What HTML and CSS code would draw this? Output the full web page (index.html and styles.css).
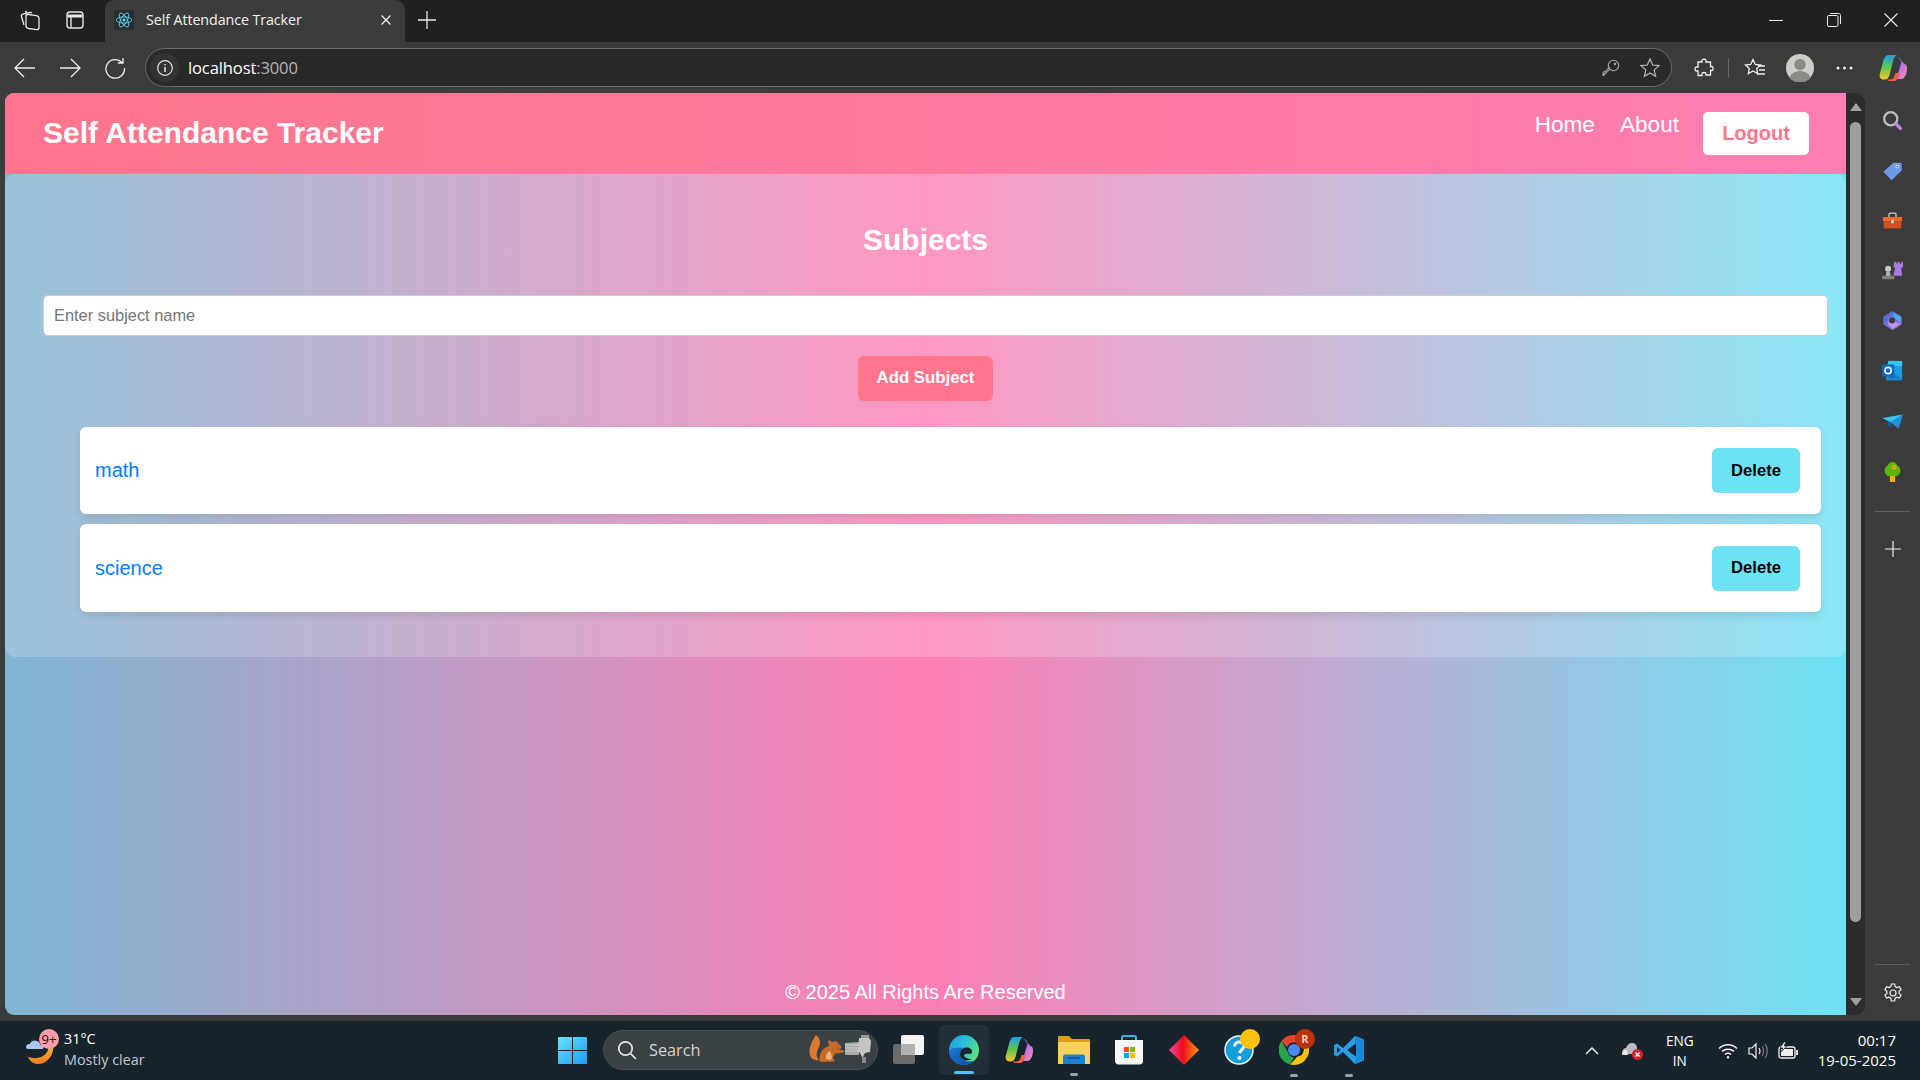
FILE: index.html
```html
<!DOCTYPE html>
<html lang="en">
<head>
<meta charset="utf-8">
<title>Self Attendance Tracker</title>
<link rel="stylesheet" href="styles.css">
</head>
<body>
<div class="tabstrip">
  <span class="strip-btn first"><svg width="24" height="24" viewBox="0 0 24 24" fill="none" stroke="#e6e6e6" stroke-width="1.3"><rect x="8" y="7" width="13" height="14" rx="2.5" transform="skewY(8) translate(0 -2)"/><path d="M6 17 3.5 8.5c-.3-1 .2-2 1.2-2.300L12 4.500c.8-.2 1.500.1 1.900.7"/><path d="M9 3.500 7 4"/></svg></span>
  <span class="strip-btn"><svg width="20" height="20" viewBox="0 0 20 20" fill="none" stroke="#e6e6e6" stroke-width="1.4"><rect x="2" y="2" width="16" height="16" rx="3"/><path d="M2.500 6h15" stroke-width="3"/><path d="M6 7v10.500"/></svg></span>
  <div class="tab">
    <span class="favicon"><svg width="18" height="18" viewBox="-12 -12 24 24" fill="none" stroke="#61dafb" stroke-width="1.100"><circle r="2" fill="#61dafb" stroke="none"/><ellipse rx="10.500" ry="4.200"/><ellipse rx="10.500" ry="4.200" transform="rotate(60)"/><ellipse rx="10.500" ry="4.200" transform="rotate(120)"/></svg></span>
    <span class="tab-title">Self Attendance Tracker</span>
    <svg class="tab-close" width="12" height="12" viewBox="0 0 12 12" stroke="#f2f2f2" stroke-width="1.300"><path d="M1.500 1.500l9 9M10.500 1.500l-9 9"/></svg>
  </div>
  <svg class="new-tab" width="18" height="18" viewBox="0 0 18 18" stroke="#e8e8e8" stroke-width="1.300"><path d="M9 0v18M0 9h18"/></svg>
  <div class="win-controls">
    <svg width="14" height="14" viewBox="0 0 14 14" stroke="#eee"><path d="M0 7.500h14"/></svg>
    <svg width="14" height="14" viewBox="0 0 14 14" fill="none" stroke="#eee"><rect x=".5" y="2.500" width="10.500" height="11" rx="1.500"/><path d="M3 .5h8.500c1.200 0 2 .8 2 2V11"/></svg>
    <svg width="14" height="14" viewBox="0 0 14 14" stroke="#eee" stroke-width="1.100"><path d="M.5.5l13 13M13.500.5l-13 13"/></svg>
  </div>
</div>

<div class="toolbar">
  <svg class="nav-first" width="22" height="20" viewBox="0 0 22 20" fill="none" stroke="#eee" stroke-width="1.300"><path d="M1 10h20M10 1 1 10l9 9"/></svg>
  <svg class="nav-next" width="22" height="20" viewBox="0 0 22 20" fill="none" stroke="#eee" stroke-width="1.300"><path d="M1 10h20M12 1l9 9-9 9"/></svg>
  <svg class="nav-next" width="22" height="22" viewBox="0 0 22 22" fill="none" stroke="#eee" stroke-width="1.300"><path d="M18 5.500A9.300 9.300 0 1 0 20.500 11M19 1v5h-5"/></svg>
  <div class="address">
    <span class="info"><svg width="16" height="16" viewBox="0 0 16 16" fill="none" stroke="#e8e8e8" stroke-width="1.200"><circle cx="8" cy="8" r="7.300"/><path d="M8 7v5M8 4v1.500" stroke-width="1.500"/></svg></span>
    <span class="url">localhost<span class="port">:3000</span></span>
    <svg class="key" width="18" height="18" viewBox="0 0 18 18" fill="none" stroke="#a8a8a8" stroke-width="1.100"><circle cx="11.500" cy="6.500" r="5.200"/><circle cx="13" cy="5" r=".7"/><path d="M7.800 10.200 1.500 16.500H1v-2.500l1-.1v-1.400h1.500l4-4.500"/></svg>
    <svg class="star" width="20" height="20" viewBox="0 0 20 20" fill="none" stroke="#b8b8b8" stroke-width="1.200"><path d="M10 1l2.700 6 6.300.6-4.800 4.300 1.400 6.400L10 15l-5.600 3.300 1.400-6.400L1 7.600 7.300 7z"/></svg>
  </div>
  <svg class="ext" width="20" height="20" viewBox="0 0 20 20" fill="none" stroke="#eee" stroke-width="1.300"><path d="M8 2.500C8 .8 12 .8 12 2.500V4h4.500v4.500H18c1.500 0 1.500 4 0 4h-1.500V17H12v-1c0-2-4-2-4 0v1.500H4V13H2.500c-2 0-2-4 0-4H4V4h4z"/></svg>
  <span class="tool-sep"></span>
  <svg class="fav" width="22" height="20" viewBox="0 0 22 20" fill="none" stroke="#eee" stroke-width="1.300"><path d="M9 1.500l2.300 5 5.200.5-3.800 3.500 1 5.300L9 13l-4.700 2.800 1-5.300L1.500 7l5.200-.5zM14 8h7M15 12h6M13 16h8"/></svg>
  <svg class="avatar" width="28" height="28" viewBox="0 0 28 28"><circle cx="14" cy="14" r="14" fill="#cfcdc8"/><circle cx="14" cy="10.500" r="5.800" fill="#8c8a86"/><path d="M3.500 24c1.500-5 6-7 10.500-7s9 2 10.500 7a14 14 0 0 1-21 0z" fill="#8c8a86"/></svg>
  <svg class="dots" width="17" height="4" viewBox="0 0 17 4" fill="#eee"><circle cx="2" cy="2" r="1.500"/><circle cx="8.500" cy="2" r="1.500"/><circle cx="15" cy="2" r="1.500"/></svg>
  <svg class="copilot" width="28" height="28" viewBox="0 0 28 28"><defs><linearGradient id="cpA" x1="0" y1="0" x2="0" y2="1"><stop offset="0" stop-color="#1f9cf0"/><stop offset=".5" stop-color="#5dc84a"/><stop offset="1" stop-color="#f7c52e"/></linearGradient><linearGradient id="cpB" x1="0" y1="0" x2="1" y2="1"><stop offset="0" stop-color="#3a6cf0"/><stop offset=".5" stop-color="#c66ce0"/><stop offset="1" stop-color="#f79aa8"/></linearGradient></defs><path d="M9.500 1h8.500c-2 1-3 3-3.800 5.500L10.500 21c-.8 3-2.500 4.500-5 4.500h-1C1.500 25.500 0 23 .8 20L4.500 6C5.500 3 7 1 9.500 1z" fill="url(#cpA)"/><path d="M18 3c2.300 0 3.700 1.500 4.500 4l3 3h0c1.500 0 2.500 2 2.500 4 0 5-2 11-6 11h-7c2.500-1 3.500-3 4-5.500l3-10C23 7 20 4 18 3z" fill="url(#cpB)"/><path d="M8 25.500h3c2.500 0 4-1.500 4.500-3.500l1-3h4l-1.500 5c-.6 2-2 3-4 3H11c-1.500 0-2.500-.5-3-1.500z" fill="#f0603a"/></svg>
</div>

<div class="workspace">
  <div class="page">
    <header class="app-header">
      <h1 class="brand">Self Attendance Tracker</h1>
      <nav class="app-nav">
        <a class="nav-link">Home</a>
        <a class="nav-link">About</a>
        <button class="logout">Logout</button>
      </nav>
    </header>
    <main class="subjects">
      <h2 class="subjects-title">Subjects</h2>
      <input class="subject-input" type="text" placeholder="Enter subject name">
      <button class="add-btn">Add Subject</button>
      <ul class="subject-list">
        <li class="subject-item"><a class="subject-link">math</a><button class="delete-btn">Delete</button></li>
        <li class="subject-item"><a class="subject-link">science</a><button class="delete-btn">Delete</button></li>
      </ul>
    </main>
    <footer class="app-footer">© 2025 All Rights Are Reserved</footer>
  </div>

  <div class="scrollbar">
    <span class="arrow-up"></span>
    <span class="thumb"></span>
    <span class="arrow-down"></span>
  </div>

  <aside class="sidebar">
    <svg class="side-ico" viewBox="0 0 24 24" fill="none"><circle cx="10" cy="10" r="7.500" stroke="#bdbdbd" stroke-width="2.600"/><path d="M16 16l5 5" stroke="#b98ae0" stroke-width="4" stroke-linecap="round"/></svg>
    <svg class="side-ico" viewBox="0 0 24 24"><path d="M13 3h8c1 0 1.500.5 1.500 1.500V12L11 23 1.500 13.500z" fill="#6c9be8"/><circle cx="17.500" cy="7.500" r="2" fill="#e8f0ff"/><circle cx="17.500" cy="7.500" r="1" fill="#35558c"/></svg>
    <svg class="side-ico" viewBox="0 0 24 24"><path d="M8 8V5c0-1 .5-1.500 1.500-1.500h5c1 0 1.500.5 1.500 1.500v3" fill="none" stroke="#c8c8c8" stroke-width="1.500"/><path d="M1 8h22v5H1z" fill="#f2692e"/><path d="M2 13h20v8H2z" fill="#d9501e"/><rect x="10.500" y="11" width="3" height="4" fill="#d8d8d8"/></svg>
    <svg class="side-ico" viewBox="0 0 24 24"><path d="M14 2h2.500v2H18V2h2v2h2V2h2v6l-2 1 1 9H13l2-9-2-1z" fill="#a77be0"/><circle cx="7" cy="10" r="3.500" fill="#c9c9c9"/><path d="M5 13h4l1 6H4z" fill="#b0b0b0"/><rect x="0" y="18" width="14" height="4" rx="1.500" fill="#7e7e7e"/></svg>
    <svg class="side-ico" viewBox="0 0 24 24"><defs><linearGradient id="m3" x1="0" y1="0" x2="1" y2="1"><stop offset="0" stop-color="#3a6fd8"/><stop offset="1" stop-color="#b070e0"/></linearGradient></defs><path d="M12 1l9 5.500c1 .6 1.500 1.500 1.500 2.500v6c0 1-.5 2-1.500 2.500L12 23l-9-5.500C2 17 1.500 16 1.500 15V9C1.500 8 2 7 3 6.500z" fill="url(#m3)"/><path d="M13 3l8 5v5l-7-4z" fill="#36b8e8"/><path d="M8 9l6 4v0l6 3-7 5-6-4z" fill="#c09ae8"/><circle cx="11.500" cy="12" r="3.500" fill="#3b3b3b"/></svg>
    <svg class="side-ico" viewBox="0 0 24 24"><path d="M7 1h16v22H5v-4z" fill="#1a9de0"/><path d="M7 1h16v6H7z" fill="#3cc0f0"/><path d="M5 22l9-7 9 7z" fill="#0f7cc8"/><rect x="0" y="5" width="14" height="14" rx="1.500" fill="#0a66c2"/><circle cx="7" cy="12" r="3.600" fill="none" stroke="#fff" stroke-width="1.800"/></svg>
    <svg class="side-ico" viewBox="0 0 24 24"><path d="M0 8l24-4-14 9z" fill="#42bdf0"/><path d="M24 4L10 13l9 7z" fill="#1a92dc"/><path d="M7 11l3 2v7l-3-4z" fill="#0a62b0"/></svg>
    <svg class="side-ico" viewBox="0 0 24 24"><rect x="9" y="17" width="6" height="7" fill="#f0b400"/><path d="M12 1c3 0 5 2 5.500 4.500 2.500 1 3.500 3 3.500 5.500 0 3-2 6-5 6H8c-3 0-5-3-5-6 0-2.500 1-4.500 3.500-5.500C7 3 9 1 12 1z" fill="#5fb40e"/><circle cx="14" cy="7" r="2.400" fill="#f0b400"/><circle cx="14" cy="7" r="1" fill="#d86820"/></svg>
    <span class="side-sep"></span>
    <svg class="side-plus" width="16" height="16" viewBox="0 0 16 16" stroke="#eee" stroke-width="1.200"><path d="M8 0v16M0 8h16"/></svg>
    <span class="side-sep side-sep-bottom"></span>
    <svg class="gear" width="20" height="20" viewBox="0 0 20 20" fill="none" stroke="#eee" stroke-width="1.200"><circle cx="10" cy="10" r="3"/><path d="M8.300 1h3.400l.5 2.600 1.700 1 2.500-.9 1.700 3-2 1.700v2l2 1.700-1.700 3-2.500-.9-1.700 1-.5 2.800H8.300l-.5-2.800-1.700-1-2.500.9-1.700-3 2-1.700v-2l-2-1.700 1.700-3 2.500.9 1.700-1z"/></svg>
  </aside>
</div>

<div class="taskbar">
  <div class="weather">
    <span class="weather-icon">
      <svg width="36" height="36" viewBox="0 0 36 36"><defs><linearGradient id="moon" x1="0" y1="0" x2="0" y2="1"><stop offset="0" stop-color="#f6c042"/><stop offset="1" stop-color="#ee7a1a"/></linearGradient></defs><path d="M28 12c2 8-3 20-14 21-5 .4-9-2-11-7 8 3 18 0 20-7 .5-2 1.500-5 5-7z" fill="url(#moon)"/><path d="M1 16c0-2 2-3.500 4-3 1-3 4-4.500 7-3 2 .8 3 2 3.500 4 2 .1 3 1 3 2.500 0 1-1 1.500-2 1.500H3c-1.500 0-2-1-2-2.500z" fill="#a9c8f0"/></svg>
      <span class="badge">9+</span>
    </span>
    <span class="weather-text"><span class="temp">31°C</span><span class="cond">Mostly clear</span></span>
  </div>
  <div class="task-center">
    <svg class="winlogo" width="29" height="29" viewBox="0 0 29 29"><defs><linearGradient id="win" x1="0" y1="0" x2="1" y2="1"><stop offset="0" stop-color="#6ce0ff"/><stop offset="1" stop-color="#1a9cf5"/></linearGradient></defs><path d="M1 1h13v13H0V2c0-.5.5-1 1-1zM15 1h13c.5 0 1 .5 1 1v12H15zM0 15h14v13H1c-.5 0-1-.5-1-1zM15 15h14v12c0 .5-.5 1-1 1H15z" fill="url(#win)"/></svg>
    <div class="search">
      <svg width="20" height="20" viewBox="0 0 20 20" fill="none" stroke="#e8e8e8" stroke-width="1.700"><circle cx="8.500" cy="8.500" r="6.700"/><path d="M13.500 13.500l5.500 5.500"/></svg>
      <span class="search-label">Search</span>
      <svg class="squirrel" width="64" height="32" viewBox="0 0 64 32"><path d="M7 1c4 3 5 8 3 12s-4 9 0 13c-5 1-9-2-9.500-7S3 6 7 1z" fill="#dd7a2e"/><path d="M11 28c-2-7 2-14 9-16l-1-6 5 2 3-1 5 5c1 1 0 3-1 3l-5-.5 9 2v2l-9 1-2 4 2 4h-2z" fill="#c66a28"/><path d="M17 25c-1-3 1-7 4-8l2 6-1 3z" fill="#eab07c"/><path d="M36 9l14-1v13H36z" fill="#a9a9a9"/><path d="M36 11h14M36 14h14M36 17h14" stroke="#d2d2d2"/><path d="M50 4h10l2 3-1 11-5 1-2 4h-1l-2-4-2-2z" fill="#c4c4c4"/><rect x="53" y="23" width="4" height="6" fill="#888"/><rect x="52" y="1" width="8" height="3" fill="#9a9a9a"/></svg>
    </div>
    <svg class="taskview" width="32" height="30" viewBox="0 0 32 30"><rect x="0" y="9" width="22" height="20" rx="2" fill="#6a6a6a"/><rect x="8" y="0" width="23" height="20" rx="2" fill="#f4f4f4"/><rect x="8" y="9" width="14" height="11" fill="#b2b2b2"/></svg>
    <div class="edge-box">
      <svg width="30" height="30" viewBox="0 0 30 30"><defs><linearGradient id="edge1" x1="0" y1="0" x2="1" y2=".5"><stop offset="0" stop-color="#1a9de0"/><stop offset=".55" stop-color="#2bc0d8"/><stop offset="1" stop-color="#5ee27a"/></linearGradient><linearGradient id="edge2" x1="0" y1="0" x2="1" y2="1"><stop offset="0" stop-color="#1a78d8"/><stop offset="1" stop-color="#0c4fa8"/></linearGradient></defs><circle cx="15" cy="15" r="15" fill="url(#edge1)"/><path d="M0 15C0 24 7 30 15 30c4 0 8-1.500 11-4.500-6 2-12 .5-14-3-2-4 0-8 3-9.500-6-1.500-12 0-15 2z" fill="url(#edge2)"/><path d="M15 13c4-1.500 8 .5 8 3.500 0 1-.5 2-1.500 2.500-3-.5-5.500 0-6.500 1 0 2 3 4 7.500 4-4 2.500-8.500 1.500-10.500-1.500s-.5-8 3-9.500z" fill="#17242b"/></svg>
      <span class="task-active"></span>
    </div>
    <svg class="task-ico first-ico" width="28" height="28" viewBox="0 0 28 28"><defs><linearGradient id="cpC" x1="0" y1="0" x2="0" y2="1"><stop offset="0" stop-color="#1f9cf0"/><stop offset=".5" stop-color="#5dc84a"/><stop offset="1" stop-color="#f7c52e"/></linearGradient><linearGradient id="cpD" x1="0" y1="0" x2="1" y2="1"><stop offset="0" stop-color="#3a6cf0"/><stop offset=".5" stop-color="#c66ce0"/><stop offset="1" stop-color="#f79aa8"/></linearGradient></defs><path d="M9.500 1h8.500c-2 1-3 3-3.800 5.500L10.500 21c-.8 3-2.500 4.500-5 4.500h-1C1.500 25.500 0 23 .8 20L4.500 6C5.500 3 7 1 9.500 1z" fill="url(#cpC)"/><path d="M18 3c2.300 0 3.700 1.500 4.500 4l3 3h0c1.500 0 2.500 2 2.500 4 0 5-2 11-6 11h-7c2.500-1 3.500-3 4-5.500l3-10C23 7 20 4 18 3z" fill="url(#cpD)"/><path d="M8 25.500h3c2.500 0 4-1.500 4.500-3.500l1-3h4l-1.500 5c-.6 2-2 3-4 3H11c-1.500 0-2.500-.5-3-1.500z" fill="#f0603a"/></svg>
    <span class="task-slot">
      <svg width="32" height="28" viewBox="0 0 32 28"><path d="M1 0h10l3 3h17c.5 0 1 .5 1 1v23c0 .5-.5 1-1 1H1c-.5 0-1-.5-1-1V1c0-.5.5-1 1-1z" fill="#dfa018"/><path d="M0 6h32v21c0 .5-.5 1-1 1H1c-.5 0-1-.5-1-1z" fill="#fad25a"/><path d="M5 28v-7c0-1.500 1-2.500 2-2.500h18c1 0 2 1 2 2.500v7z" fill="#1f7ed0"/><path d="M10 22h12" stroke="#0d5296" stroke-width="1.500"/></svg>
      <span class="task-dot"></span>
    </span>
    <svg class="task-ico store-ico" width="30" height="30" viewBox="0 0 30 30"><path d="M8 6V3c0-1 .5-2 1.500-2h11c1 0 1.500 1 1.500 2v3" fill="none" stroke="#2ab8f0" stroke-width="2"/><path d="M1 5h28v21c0 2-1.500 3.500-3.500 3.500h-21C2.500 29.500 1 28 1 26z" fill="#f6f6f6"/><rect x="10" y="12" width="5" height="5" fill="#f25022"/><rect x="16" y="12" width="5" height="5" fill="#7fba00"/><rect x="10" y="18" width="5" height="5" fill="#00a4ef"/><rect x="16" y="18" width="5" height="5" fill="#ffb900"/></svg>
    <svg class="task-ico" width="30" height="30" viewBox="0 0 30 30"><defs><linearGradient id="dia" x1="0" y1="0" x2="1" y2="0"><stop offset="0" stop-color="#f54ea2"/><stop offset=".45" stop-color="#ee0a20"/><stop offset="1" stop-color="#ff9a00"/></linearGradient></defs><path d="M15 0l15 15-15 15L0 15z" fill="url(#dia)"/></svg>
    <span class="task-slot">
      <svg width="30" height="30" viewBox="0 0 30 30"><circle cx="15" cy="15" r="14" fill="#149fd8" stroke="#eef" stroke-width="1.500"/><path d="M10.500 11.500c0-2.500 2-4.500 4.800-4.500s4.700 1.800 4.700 4c0 3.500-4 3.500-4.300 7" fill="none" stroke="#fff" stroke-width="3"/><circle cx="15.500" cy="23" r="2" fill="#fff"/></svg>
      <span class="help-dot"></span>
    </span>
    <span class="task-slot">
      <svg width="30" height="30" viewBox="0 0 30 30"><path d="M15 0a15 15 0 0 1 13 7.500H15a7.500 7.500 0 0 0-7 5L2.500 6A15 15 0 0 1 15 0z" fill="#e0442f"/><path d="M2.500 6 9 17.500A7.500 7.500 0 0 0 15 22.500L11 29.500A15 15 0 0 1 2.500 6z" fill="#2ba24c"/><path d="M28 7.500A15 15 0 0 1 15 30l-4-.5 7.500-8A7.500 7.500 0 0 0 21 7.500z" fill="#fbc013"/><circle cx="15" cy="15" r="6" fill="#4a89f3"/></svg>
      <span class="profile-dot">R</span>
      <span class="task-dot"></span>
    </span>
    <span class="task-slot">
      <svg width="30" height="30" viewBox="0 0 30 30"><path d="M21 1 9 13 3 8.500 0 10v10l3 1.500 6-4.500 12 12 9-3.500V4.500z" fill="#2a9fe8"/><path d="M21 1l9 3.500v21L21 29z" fill="#1a8ad8"/><path d="M22 8.500 13 15l9 6.500z" fill="#17242b"/><path d="M3 12l3.500 3L3 18z" fill="#17242b"/></svg>
      <span class="task-dot"></span>
    </span>
  </div>
  <div class="tray">
    <svg width="14" height="8" viewBox="0 0 14 8" fill="none" stroke="#eee" stroke-width="1.500"><path d="M1 7l6-6 6 6"/></svg>
    <svg class="tray-cloud" width="22" height="18" viewBox="0 0 22 18"><path d="M1 11c0-3 2-5 4-5 1-3 3-5 6-5s5 2 5 5v6H3c-1 0-2 0-2-1z" fill="#b8bcbe"/><path d="M1 12c0-3 2-4 5-4l1 5H3c-1 0-2 0-2-1z" fill="#e8e8e8"/><circle cx="16.500" cy="12.500" r="5.500" fill="#d9232e"/><path d="M14.500 10.500l4 4M18.500 10.500l-4 4" stroke="#fff" stroke-width="1.400"/></svg>
    <span class="lang"><span>ENG</span><span>IN</span></span>
    <svg class="wifi" width="20" height="16" viewBox="0 0 20 16" fill="none" stroke="#f2f2f2" stroke-width="1.500"><path d="M1 5.500c5-5 13-5 18 0M4 8.500c3.500-3 8.500-3 12 0M7 11.500c1.800-1.500 4.200-1.500 6 0"/><circle cx="10" cy="14.300" r="1.200" fill="#f2f2f2" stroke="none"/></svg>
    <svg class="speaker" width="20" height="18" viewBox="0 0 20 18" fill="none" stroke="#eee" stroke-width="1.200"><path d="M1 6v6h3l4 4V2L4 6z"/><path d="M11 6c1.200 1.500 1.200 4.500 0 6"/><path d="M14 4c2 2.500 2 7.500 0 10M17 2c3 3.500 3 10.500 0 14" stroke="#777"/></svg>
    <svg class="battery" width="20" height="18" viewBox="0 0 20 18"><rect x="1" y="5" width="16" height="11" rx="2" fill="none" stroke="#eee" stroke-width="1.300"/><rect x="3" y="7" width="12" height="7" fill="#eee"/><rect x="18" y="8" width="2" height="5" fill="#eee"/><path d="M6 0 2 6h3L3 10l6-6H6l2-4z" fill="#eee" stroke="#17242b" stroke-width=".7"/></svg>
    <span class="clock"><span>00:17</span><span>19-05-2025</span></span>
  </div>
</div>
</body>
</html>
```
FILE: styles.css
```css
* { box-sizing: border-box; }
html, body { margin: 0; height: 100%; }
body {
  width: 1920px;
  height: 1080px;
  overflow: hidden;
  display: flex;
  flex-direction: column;
  background: #3b3b3b;
  font-family: "Liberation Sans", Arial, sans-serif;
}
svg { display: block; flex: none; }

.tabstrip {
  height: 42px;
  flex: none;
  display: flex;
  align-items: center;
  background: #202020;
  color: #f2f2f2;
  font-family: "Open Sans", sans-serif;
}
.strip-btn { width: 45px; display: flex; justify-content: center; padding-bottom: 2px; }
.strip-btn.first { margin-left: 7px; }
.tab {
  width: 300px;
  height: 42px;
  margin-left: 8px;
  padding: 0 13px 3px 9px;
  display: flex;
  align-items: center;
  background: #3b3b3b;
  border-radius: 9px 9px 0 0;
}
.favicon {
  width: 20px;
  height: 20px;
  display: flex;
  align-items: center;
  justify-content: center;
  background: #2b2b2b;
  border-radius: 2px;
}
.tab-title { margin-left: 12px; font-size: 14.3px; flex: 1; letter-spacing: -.1px; }
.new-tab { margin: 0 0 2px 13px; }
.win-controls {
  margin: 0 22px 3px auto;
  display: flex;
  gap: 43.500px;
}

.toolbar {
  height: 51px;
  flex: none;
  display: flex;
  align-items: center;
  background: #3b3b3b;
}
.nav-first { margin-left: 14px; }
.nav-next { margin-left: 23px; }
.address {
  margin-left: 19px;
  width: 1527px;
  height: 39px;
  display: flex;
  align-items: center;
  padding: 0 11px 0 4px;
  background: #292929;
  border: 1px solid #6c6c6c;
  border-radius: 20px;
}
.info {
  width: 29px;
  height: 29px;
  display: flex;
  align-items: center;
  justify-content: center;
  background: #333;
  border-radius: 50%;
}
.url {
  margin-left: 9px;
  font-family: "Open Sans", sans-serif;
  font-size: 16.6px;
  letter-spacing: -.15px;
  color: #fff;
}
.port { color: #b5b5b5; }
.key { margin-left: auto; }
.star { margin-left: 20px; }
.ext { margin-left: 22px; }
.tool-sep { margin-left: 14px; width: 1px; height: 20px; background: #666; }
.fav { margin-left: 15px; }
.avatar { margin-left: 20px; }
.dots { margin-left: 22px; }
.copilot { margin-left: 26px; }

.workspace { flex: none; height: 922px; display: flex; }
.page {
  margin-left: 5px;
  width: 1841px;
  display: flex;
  flex-direction: column;
  overflow: hidden;
  border-radius: 9px 0 0 9px;
  background: linear-gradient(90deg, #7fb6d3, #ff7eb3 50%, #6ee2f5);
  color: #fff;
}
.app-header {
  height: 81px;
  flex: none;
  padding: 0 37px 0 38px;
  display: flex;
  align-items: center;
  justify-content: space-between;
  background: linear-gradient(90deg, #ff758c, #ff7eb3);
}
.brand { margin: 0 0 2px; font-size: 30px; font-weight: 700; }
.app-nav { display: flex; align-items: flex-start; gap: 25px; }
.nav-link { font-size: 22.6px; line-height: 26px; }
.logout {
  height: 43px;
  width: 106px;
  margin-left: -1px;
  border: 0;
  border-radius: 5px;
  background: #fff;
  color: #ff758c;
  font: 700 20px "Liberation Sans", Arial, sans-serif;
}
.subjects {
  flex: none;
  padding: 49px 38px 45px;
  background: rgba(255, 255, 255, .2);
  border-radius: 10px;
}
.subjects-title {
  margin: 0 0 38px;
  text-align: center;
  font-size: 30px;
  line-height: 34px;
  font-weight: 700;
}
.subject-input {
  display: block;
  width: calc(100% + 20px);
  height: 41px;
  padding: 0 10px;
  border: 1px solid #ccc;
  border-radius: 5px;
  background: #fff;
  font: 16.4px "Liberation Sans", Arial, sans-serif;
}
.subject-input::placeholder { color: #757575; }
.add-btn {
  display: block;
  margin: 20px auto 0;
  padding: 0 0 2px;
  width: 135px;
  height: 45px;
  border: 0;
  border-radius: 6px;
  background: #ff758c;
  color: #fff;
  font: 700 16.8px "Liberation Sans", Arial, sans-serif;
}
.subject-list {
  list-style: none;
  margin: 26px -13px 0 37px;
  padding: 0;
  display: flex;
  flex-direction: column;
  gap: 10px;
}
.subject-item {
  height: 87.400px;
  padding: 0 21px 0 15px;
  display: flex;
  align-items: center;
  justify-content: space-between;
  background: #fff;
  border-radius: 6px;
  box-shadow: 0 4px 8px rgba(0, 0, 0, .1);
}
.subject-link { color: #007bff; font-size: 20px; }
.delete-btn {
  width: 88px;
  height: 45px;
  border: 0;
  border-radius: 6px;
  background: #6ee2f5;
  color: #000;
  font: 700 16.6px "Liberation Sans", Arial, sans-serif;
}
.app-footer {
  margin-top: auto;
  padding-bottom: 11px;
  text-align: center;
  font-size: 20px;
  line-height: 24px;
}

.scrollbar {
  width: 19px;
  flex: none;
  background: #2c2c2c;
  border-radius: 0 9px 9px 0;
  display: flex;
  flex-direction: column;
  align-items: center;
  padding: 10px 0 9px;
}
.arrow-up, .arrow-down {
  width: 0;
  height: 0;
  border-left: 6.500px solid transparent;
  border-right: 6.500px solid transparent;
}
.arrow-up { border-bottom: 8px solid #a0a0a0; }
.arrow-down { border-top: 8px solid #a0a0a0; margin-top: auto; }
.thumb {
  width: 11px;
  height: 800px;
  margin-top: 11px;
  background: #9f9f9f;
  border-radius: 6px;
}
.sidebar {
  width: 55px;
  flex: none;
  display: flex;
  flex-direction: column;
  align-items: center;
  gap: 29.200px;
  padding-top: 16.500px;
}
.side-ico { width: 21px; height: 21px; }
.side-sep { width: 35px; height: 1px; background: #5e5e5e; }
.side-sep-bottom { margin-top: auto; margin-bottom: -11px; }
.gear { margin-bottom: 12px; }

.taskbar {
  margin-top: 6px;
  flex: 1;
  display: flex;
  align-items: center;
  background: #17242b;
  color: #fff;
  font-family: "Open Sans", sans-serif;
}
.weather { width: 558px; flex: none; display: flex; align-items: center; padding-left: 25px; }
.weather-icon { position: relative; width: 39px; height: 36px; margin-top: -4px; }
.badge {
  position: absolute;
  left: 14px;
  top: -2px;
  width: 20px;
  height: 20px;
  border-radius: 50%;
  background: #ff9aa8;
  color: #111;
  font-size: 13px;
  line-height: 20px;
  text-align: center;
}
.weather-text { display: flex; flex-direction: column; font-size: 14.4px; line-height: 21px; margin-top: -3px; }
.cond { color: #c3c8ca; }
.task-center { display: flex; align-items: center; padding-bottom: 1px; }
.search {
  margin-left: 16px;
  width: 275px;
  height: 40px;
  padding: 0 4px 0 13px;
  display: flex;
  align-items: center;
  background: #3a4145;
  border: 1px solid #4a5155;
  border-radius: 20px;
}
.search-label { margin-left: 12px; font-size: 16.3px; color: #d2d5d6; }
.squirrel { margin-left: auto; }
.taskview { margin-left: 15px; }
.edge-box {
  position: relative;
  margin-left: 14px;
  width: 50px;
  height: 50px;
  display: flex;
  align-items: center;
  justify-content: center;
  background: #232f36;
  border-radius: 5px;
}
.task-active {
  position: absolute;
  left: 15px;
  bottom: 1px;
  width: 20px;
  height: 3px;
  border-radius: 2px;
  background: #4cc2ff;
}
.task-ico { margin-left: 25px; }
.first-ico { margin-left: 16px; }
.store-ico { margin-left: 24px; }
.task-slot { position: relative; margin-left: 25px; display: block; }
.task-dot {
  position: absolute;
  left: 50%;
  bottom: -12px;
  width: 8px;
  height: 3px;
  margin-left: -4px;
  border-radius: 2px;
  background: #9aa0a3;
}
.help-dot {
  position: absolute;
  right: -6px;
  top: -6px;
  width: 20px;
  height: 20px;
  border-radius: 50%;
  background: #ffc20e;
}
.profile-dot {
  position: absolute;
  right: -6px;
  top: -6px;
  width: 20px;
  height: 20px;
  border-radius: 50%;
  background: #b8340f;
  color: #f3c9bc;
  font-size: 11px;
  font-weight: 700;
  line-height: 20px;
  text-align: center;
}
.tray {
  margin-left: auto;
  padding-right: 24px;
  display: flex;
  align-items: center;
  font-size: 13.600px;
}
.tray-cloud { margin-left: 22px; }
.lang {
  margin-left: 17px;
  width: 40px;
  display: flex;
  flex-direction: column;
  align-items: center;
  line-height: 20px;
}
.wifi { margin-left: 18px; }
.speaker { margin-left: 10px; }
.battery { margin-left: 10px; }
.clock {
  margin: -2px 0 0 20px;
  display: flex;
  flex-direction: column;
  align-items: flex-end;
  font-size: 15px;
  line-height: 20px;
}
```
